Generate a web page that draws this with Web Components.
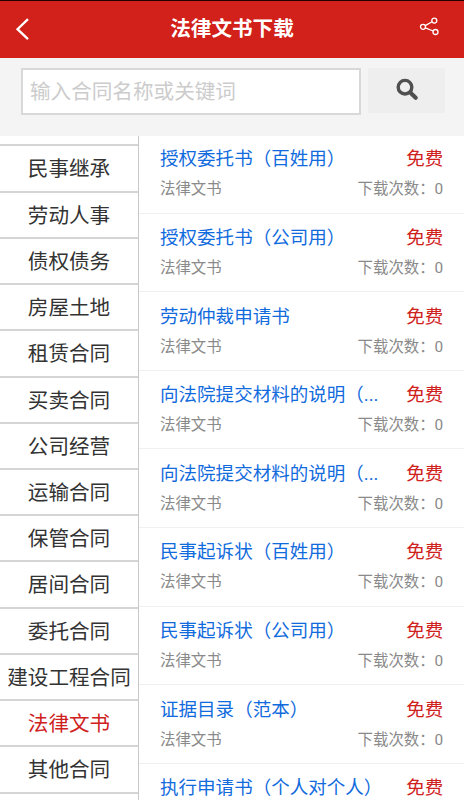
<!DOCTYPE html>
<html lang="zh-CN">
<head>
<meta charset="utf-8">
<title>法律文书下载</title>
<style>
html,body{margin:0;height:100%;overflow:hidden}
body{font-family:Roboto,"Noto Sans CJK SC",sans-serif;background:#fff;color:#333}
</style>
</head>
<body>
<legal-app></legal-app>
<script>
const define = (name, html, setup) => customElements.define(name, class extends HTMLElement {
  constructor() {
    super();
    const t = document.createElement('template');
    t.innerHTML = html;
    this.attachShadow({ mode: 'open' }).append(t.content.cloneNode(true));
  }
  connectedCallback() { if (setup) setup(this.shadowRoot, this); }
});

define('app-header', `
<style>
:host{display:grid;grid-template-columns:60px 1fr 60px;height:57.7px;box-sizing:border-box;background:#d2201b;border-top:1px solid #210000;color:#fff}
h1{margin:0;text-align:center;font-size:20.6px;font-weight:700;line-height:56px;white-space:nowrap}
svg{display:block}
.back{margin:16px 0 0 15px}
.share{margin:14px 0 0 14px}
</style>
<svg class="back" width="16" height="24" viewBox="0 0 16 24" fill="none" stroke="#fff" stroke-width="2.3"><path d="M13 2.2 2.5 12.2 13 22.2"/></svg>
<h1><slot></slot></h1>
<svg class="share" width="24" height="24" viewBox="0 0 24 24" fill="none" stroke="#fff" stroke-width="1.3"><circle cx="16.3" cy="5.6" r="2.5"/><circle cx="5" cy="11.8" r="2.5"/><circle cx="17.5" cy="17" r="2.5"/><path d="M7.2 10.6 14.1 6.8M7.3 12.8 15.2 16"/></svg>
`);

define('search-bar', `
<style>
:host{display:flex;gap:7px;box-sizing:border-box;height:78.3px;padding:10.3px 19px 0 21px;background:#f4f4f4}
.field{box-sizing:border-box;width:340px;height:47.5px;border:2px solid #d8d8d8;background:#fff;padding-left:7px;font-size:20.6px;line-height:45px;color:#ccc;white-space:nowrap}
button{width:77px;height:45px;border:0;padding:0;background:#eee;display:grid;place-items:center}
</style>
<div class="field"><slot></slot></div>
<button aria-label="搜索"><svg width="24" height="24" viewBox="0 0 24 24" fill="none" stroke="#505050" stroke-linecap="round"><circle cx="10" cy="9.2" r="6.8" stroke-width="3.4"/><path d="M16 15.2 20.7 19.7" stroke-width="4.2"/></svg></button>
`);

define('category-item', `
<style>
:host{display:block;flex:none;box-sizing:border-box;height:46.22px;border-bottom:2px solid #d5d5d5;text-align:center;font-size:20.6px;line-height:46.6px;white-space:nowrap;color:#333}
:host([active]){color:#cf211d}
</style><slot></slot>`);

define('document-row', `
<style>
:host{display:grid;grid-template-columns:224px 1fr;grid-template-rows:29px 30px;flex:none;box-sizing:border-box;height:78.6px;padding:10.5px 20.8px 0 21px;border-bottom:1px solid #f0f0f0;white-space:nowrap}
.title{font-size:18.55px;line-height:29px;color:#126bdd}
.price{text-align:right;font-size:18.5px;line-height:28px;color:#cf211d}
.meta{font-size:15.4px;line-height:31px;color:#8a8a8a}
.bottom{grid-column:1 / -1;display:flex;justify-content:space-between}
</style>
<div class="title"><slot></slot></div><div class="price">免费</div>
<div class="bottom"><div class="meta">法律文书</div><div class="meta">下载次数：0</div></div>`);

define('legal-app', `
<style>
:host{display:flex;flex-direction:column;height:100vh;overflow:hidden}
app-header,search-bar{flex:none}
main{display:grid;grid-template-columns:139px 1fr;flex:1;min-height:0;overflow:hidden}
nav{display:flex;flex-direction:column;box-sizing:border-box;border-right:1px solid #c8c8c8;overflow:hidden;min-height:0}
nav::before{content:"";box-sizing:border-box;flex:none;height:10.5px;border-bottom:2px solid #d5d5d5}
section{display:flex;flex-direction:column;overflow:hidden;min-width:0;min-height:0}
section document-row:first-child{margin-top:-1px}
</style>
<app-header>法律文书下载</app-header>
<search-bar>输入合同名称或关键词</search-bar>
<main><nav></nav><section></section></main>`, root => {
  const fill = (parent, tag, texts, active) => texts.forEach(text => {
    const el = document.createElement(tag);
    el.textContent = text;
    if (text === active) el.setAttribute('active', '');
    root.querySelector(parent).append(el);
  });
  fill('nav', 'category-item', ['民事继承','劳动人事','债权债务','房屋土地','租赁合同','买卖合同','公司经营','运输合同','保管合同','居间合同','委托合同','建设工程合同','法律文书','其他合同'], '法律文书');
  fill('section', 'document-row', ['授权委托书（百姓用）','授权委托书（公司用）','劳动仲裁申请书','向法院提交材料的说明（...','向法院提交材料的说明（...','民事起诉状（百姓用）','民事起诉状（公司用）','证据目录（范本）','执行申请书（个人对个人）']);
});
</script>
</body>
</html>
